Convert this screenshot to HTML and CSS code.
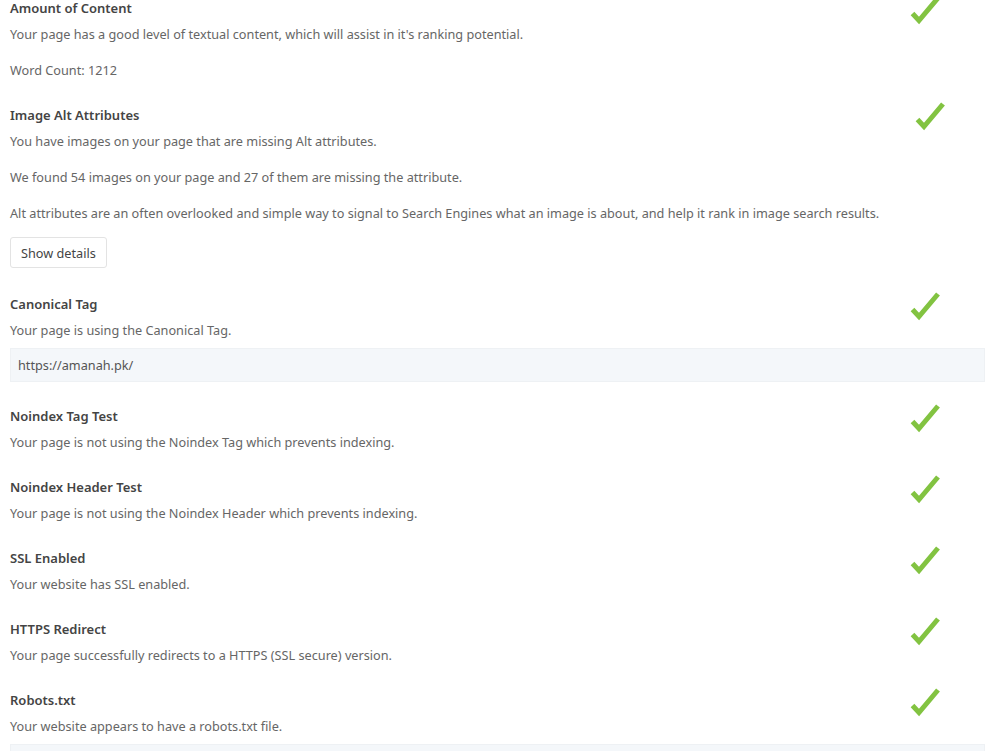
FILE: index.html
```html
<!DOCTYPE html>
<html lang="en">
<head>
<meta charset="utf-8">
<title>SEO checks</title>
<link rel="stylesheet" href="styles.css">
</head>
<body>
<main class="checks">
  <section class="check check--first">
    <h3 class="check__title">Amount of Content</h3>
    <div class="check__icon"><svg viewBox="0 0 30 30" width="30" height="30"><path d="M2.5 18.5 L9 25.5 L28 3" fill="none" stroke="#82c341" stroke-width="5"/></svg></div>
    <p class="check__text">Your page has a good level of textual content, which will assist in it's ranking potential.</p>
    <p class="check__text">Word Count: 1212</p>
  </section>

  <section class="check">
    <h3 class="check__title">Image Alt Attributes</h3>
    <div class="check__icon check__icon--shift"><svg viewBox="0 0 30 30" width="30" height="30"><path d="M2.5 18.5 L9 25.5 L28 3" fill="none" stroke="#82c341" stroke-width="5"/></svg></div>
    <p class="check__text">You have images on your page that are missing Alt attributes.</p>
    <p class="check__text">We found 54 images on your page and 27 of them are missing the attribute.</p>
    <p class="check__text">Alt attributes are an often overlooked and simple way to signal to Search Engines what an image is about, and help it rank in image search results.</p>
    <button class="check__button" type="button">Show details</button>
  </section>

  <section class="check">
    <h3 class="check__title">Canonical Tag</h3>
    <div class="check__icon"><svg viewBox="0 0 30 30" width="30" height="30"><path d="M2.5 18.5 L9 25.5 L28 3" fill="none" stroke="#82c341" stroke-width="5"/></svg></div>
    <p class="check__text">Your page is using the Canonical Tag.</p>
    <div class="check__box">https://amanah.pk/</div>
  </section>

  <section class="check">
    <h3 class="check__title">Noindex Tag Test</h3>
    <div class="check__icon"><svg viewBox="0 0 30 30" width="30" height="30"><path d="M2.5 18.5 L9 25.5 L28 3" fill="none" stroke="#82c341" stroke-width="5"/></svg></div>
    <p class="check__text">Your page is not using the Noindex Tag which prevents indexing.</p>
  </section>

  <section class="check">
    <h3 class="check__title">Noindex Header Test</h3>
    <div class="check__icon"><svg viewBox="0 0 30 30" width="30" height="30"><path d="M2.5 18.5 L9 25.5 L28 3" fill="none" stroke="#82c341" stroke-width="5"/></svg></div>
    <p class="check__text">Your page is not using the Noindex Header which prevents indexing.</p>
  </section>

  <section class="check">
    <h3 class="check__title">SSL Enabled</h3>
    <div class="check__icon"><svg viewBox="0 0 30 30" width="30" height="30"><path d="M2.5 18.5 L9 25.5 L28 3" fill="none" stroke="#82c341" stroke-width="5"/></svg></div>
    <p class="check__text">Your website has SSL enabled.</p>
  </section>

  <section class="check">
    <h3 class="check__title">HTTPS Redirect</h3>
    <div class="check__icon"><svg viewBox="0 0 30 30" width="30" height="30"><path d="M2.5 18.5 L9 25.5 L28 3" fill="none" stroke="#82c341" stroke-width="5"/></svg></div>
    <p class="check__text">Your page successfully redirects to a HTTPS (SSL secure) version.</p>
  </section>

  <section class="check">
    <h3 class="check__title">Robots.txt</h3>
    <div class="check__icon"><svg viewBox="0 0 30 30" width="30" height="30"><path d="M2.5 18.5 L9 25.5 L28 3" fill="none" stroke="#82c341" stroke-width="5"/></svg></div>
    <p class="check__text">Your website appears to have a robots.txt file.</p>
    <div class="check__box check__box--empty"></div>
  </section>
</main>
</body>
</html>
```

FILE: styles.css
```css
html, body {
  margin: 0;
  padding: 0;
  background: #ffffff;
}

body {
  font-family: "Noto Sans", "Open Sans", sans-serif;
  font-size: 12.7px;
  color: #666666;
  overflow: hidden;
}

.checks {
  padding: 0 15px 0 10px;
  margin-top: -2px;
}

.check {
  display: grid;
  grid-template-columns: 1fr 74px;
  align-items: start;
  padding-bottom: 9px;
}

.check__title {
  grid-column: 1;
  margin: 0 0 6px;
  font-size: 13px;
  line-height: 20px;
  font-weight: 600;
  color: #444444;
}

.check__icon {
  grid-column: 2;
  grid-row: 1 / span 2;
  width: 30px;
  height: 30px;
  margin-top: -3px;
  margin-left: -1px;
}

.check__icon svg {
  display: block;
}

.check__icon--shift {
  margin-left: 4px;
  margin-top: -4px;
}

.check__text {
  grid-column: 1;
  margin: 0 0 16px;
  line-height: 20px;
}

.check__button {
  grid-column: 1;
  justify-self: start;
  margin: -2px 0 17px;
  height: 31px;
  padding: 0 10px;
  font-family: inherit;
  font-size: 12.7px;
  color: #444444;
  background: #ffffff;
  border: 1px solid #e3e3e3;
  border-radius: 3px;
}

.check__box {
  grid-column: 1 / -1;
  margin: -8px 0 15px;
  padding: 6px 7px;
  line-height: 20px;
  background: #f4f7fa;
  border: 1px solid #eef1f4;
  color: #555555;
}

.check__box--empty {
  min-height: 20px;
}
```
